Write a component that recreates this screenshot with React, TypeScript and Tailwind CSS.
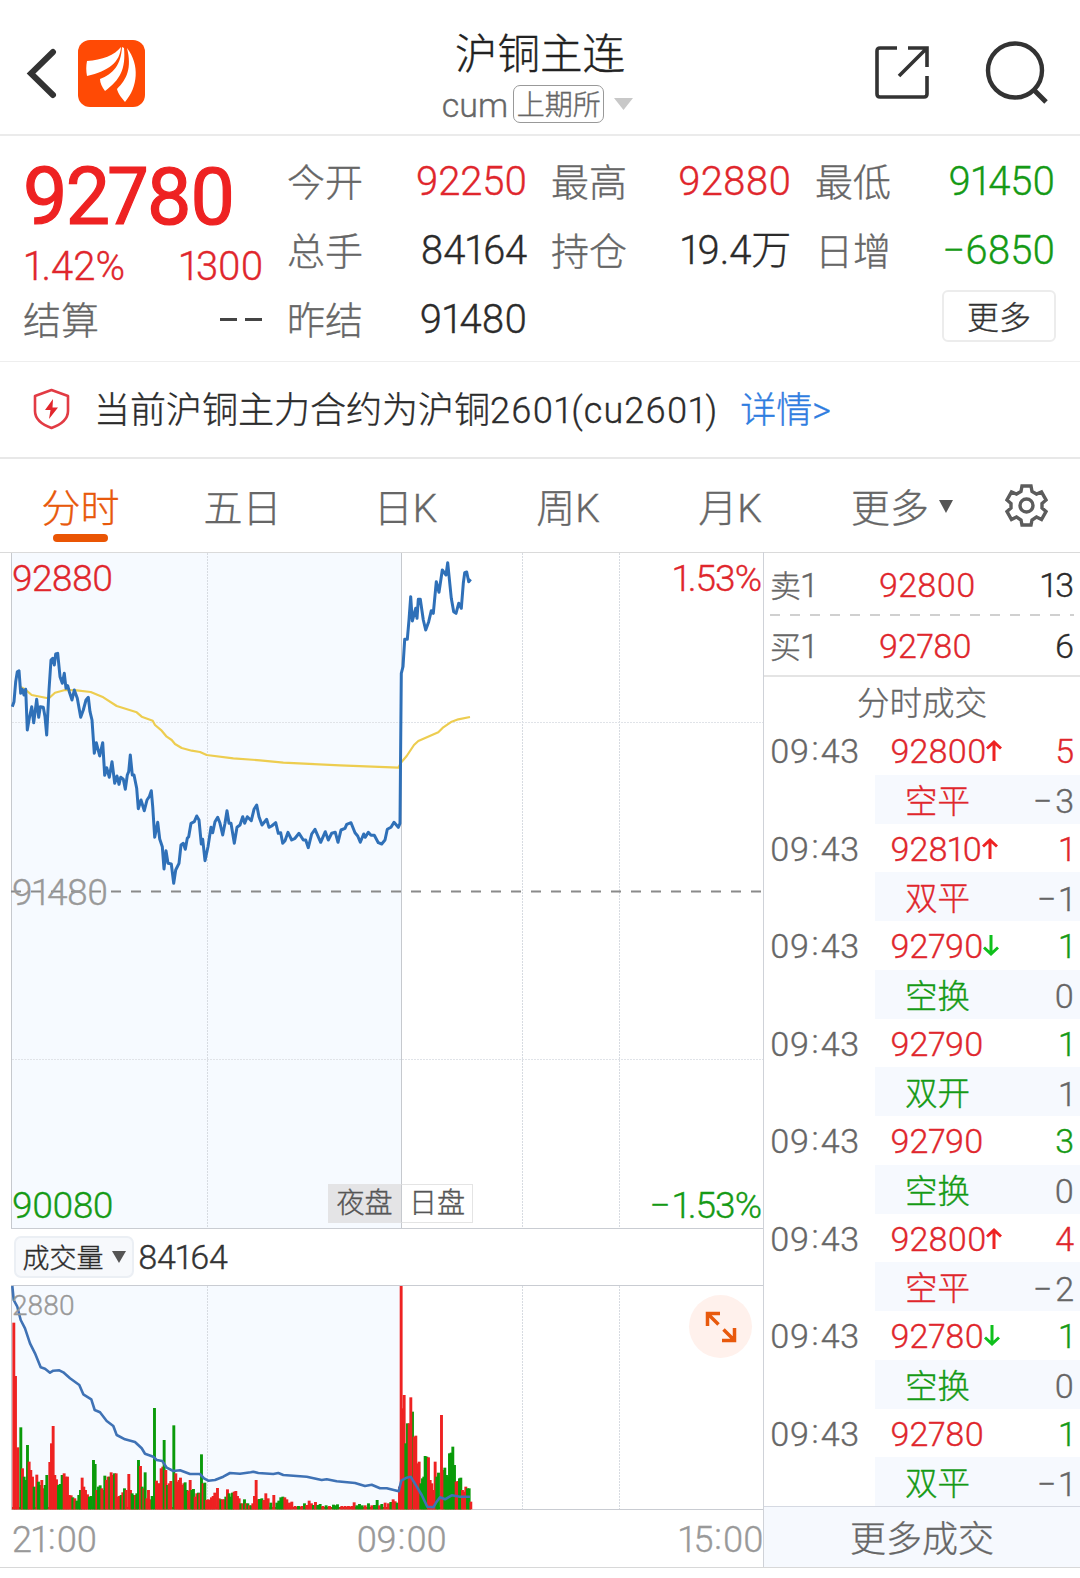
import React from 'react';

type Pt = [number, number];

const toPts = (s: string): Pt[] =>
  s.trim().split(/\s+/).map((p) => p.split(',').map(Number) as Pt);

/* Series are stored at three units per pixel, with the origin on the top left of their pane. */
const shift = (pts: Pt[], dx: number) => pts.map(([x, y]) => [x + dx, y] as Pt);
const line = (pts: Pt[], top: number) =>
  pts.map(([x, y]) => `${(x / 3).toFixed(1)},${(y / 3 + top).toFixed(1)}`).join(' ');

const priceNight = toPts(`37,500 42,485 47,425 52,395 57,392 62,460 67,448 72,465 77,448 82,570 88,535 95,500 101,548 110,478 116,532 121,500 130,502 135,530 140,585 147,450 153,360 158,355 163,375 167,342 173,340 180,410 187,430 193,400 198,445 203,437 208,455 216,480 223,450 232,475 242,532 250,510 258,480 265,472 270,515 276,540 283,640 289,608 299,648 308,608 314,706 320,683 328,712 336,665 344,730 351,708 357,733 362,712 370,718 376,748 382,705 386,695 391,645 397,705 402,705 410,745 415,806 423,780 433,812 441,780 448,770 454,752 458,800 464,892 473,847 479,897 487,920 492,987 498,932 504,970 514,972 521,1030 527,990 537,970 543,915 550,910 556,928 562,895 566,890 573,850 583,845 590,828 597,840 604,912 608,898 615,962 624,920 633,862 638,878 645,845 653,832 660,850 668,885 675,850 681,812 687,850 693,850 703,910 711,862`);
const priceDay = shift(toPts(`0,855 8,830 14,850 22,830 34,842 42,808 50,795 57,830 66,855 80,838 87,862 95,858 107,848 115,880 122,878 128,910 135,902 144,877 155,900 165,895 177,880 190,900 197,900 205,923 215,882 225,868 242,907 256,875 265,900 275,880 286,877 294,907 303,870 315,865 320,853 333,848 345,878 353,888 361,907 371,882 376,892 385,877 393,886 403,886 415,908 425,912 435,900 442,868 453,862 462,847 475,862 480,850 484,400 489,380 494,298 502,298 507,240 512,170 517,243 527,205 531,235 535,178 541,178 550,240 557,270 566,245 574,212 580,220 589,125 597,157 607,90 618,105 623,68 634,175 641,215 648,220 656,190 664,205 670,130 674,98 680,96 686,125 692,118`), 720);
const average = [
  ...toPts(`60,440 75,448 95,465 140,474 150,472 165,458 195,450 230,451 272,456 310,472 350,498 410,517 425,530 458,542 465,555 485,572 500,590 515,600 525,612 545,624 575,632 600,636 620,645 700,655 780,661`),
  ...shift(toPts(`130,668 300,676 475,683 484,667 500,648 522,615 535,603 595,577 610,562 635,545 655,538 690,531`), 720),
];
const interest = [
  ...toPts(`37,378 41,420 52,440 62,480 75,505 90,550 105,580 122,622 135,626 150,638 160,632 178,631 190,637 210,655 238,675 250,703 274,718 284,750 300,757 320,783 340,798 350,825 375,838 405,846 425,865 435,881 460,890 470,900 487,903 500,923 520,933 540,931 570,942 600,942 612,955 625,962 645,960 670,950 690,939 720,941 752,937`),
  ...shift(toPts(`40,935 55,939 100,942 115,939 130,945 200,950 245,960 260,958 290,964 345,969 375,978 395,974 420,985 440,985 476,994 484,962 500,953 512,950 530,980 545,1005 562,1040 580,1042 590,1025 600,1012 615,1018 635,1006 660,1010 690,1010`), 720),
];

type Bar = { x: number; y: number; up: boolean };
const toBars = (s: string, dx: number): Bar[] =>
  s.trim().split(/\s+/).map((t) => {
    const [x, y] = t.slice(0, -1).split(',').map(Number);
    return { x: x + dx, y, up: t.endsWith('R') };
  });
const bars: Bar[] = [
  ...toBars(`41,488R 46,648R 53,862R 62,802G 67,925R 72,950G 77,960G 82,855G 87,905R 92,930R 97,950R 102,980G 110,944R 115,965G 120,975G 125,960R 130,985R 135,975G 140,945G 149,906R 154,850R 159,798R 164,945R 169,958R 175,975G 180,972G 186,945G 192,940R 197,950R 202,950R 207,1005R 213,1006R 218,1012G 224,1015R 230,1022G 236,1005G 241,990G 246,953R 251,980R 256,990R 262,1003R 268,1010G 273,1008G 280,900G 285,912G 290,990R 295,980G 300,976G 305,985R 310,990R 314,947G 319,960R 324,950R 329,950G 333,937R 338,945R 343,940G 348,940R 353,1010R 358,1008R 363,1005G 368,997R 373,985G 378,990R 386,942R 391,990R 396,1000G 401,1005G 406,1005R 410,1000G 415,900G 421,918R 426,980G 431,985R 435,937G 440,1015R 445,990R 450,1018R 456,1008G 463,744G 469,962R 474,970R 479,970R 483,925R 488,920R 492,840G 497,930R 502,975G 507,970R 512,963R 521,796G 527,940R 532,965R 537,960R 541,953R 546,975R 551,970R 555,967G 560,990G 565,992R 570,960R 575,990G 580,987G 585,1010R 590,1000R 595,998G 599,1000R 604,883G 609,970R 614,968G 619,1020R 624,1018R 629,1020R 634,1012R 639,1008R 644,998R 652,984R 657,1015R 662,1018G 667,1018R 672,1018R 677,1010G 682,988R 687,1000G 692,1010G 697,998G 702,995R 707,993R 712,1008R 717,1015R 722,1030G 728,1030R 733,1018G 738,1030R 743,1030G 748,1036R 753,1036G 758,1030R 763,1008R 768,960R 773,1018R`, 0),
  ...toBars(`58,1017G 65,1015G 71,1020R 77,1000R 84,1015R 92,1028G 101,1005R 110,1028G 116,1022G 122,1012G 128,1010G 134,1012R 140,1018R 148,1028R 155,1025R 165,1038R 175,1038G 185,1038R 193,1030G 200,1035R 207,1022R 214,1030R 220,1035G 226,1026R 233,1035G 240,1032G 248,1038R 258,1036G 268,1038R 280,1034G 286,1036G 292,1033G 305,1038R 315,1038R 325,1038R 335,1038R 342,1027R 350,1036G 358,1032G 366,1036G 375,1036R 385,1030G 395,1036R 403,1035G 411,1020G 418,1036R 425,1032G 435,1028R 445,1030R 452,1026G 459,1018R 465,1024R 471,1028G 478,980R 488,745R 492,705R 483,378R 497,850G 502,790G 507,790R 517,755G 512,712R 522,830R 527,827R 532,910R 537,905R 542,970G 547,955G 551,950G 555,888G 560,890G 565,892R 570,960R 575,970R 580,990R 585,905R 590,950G 595,938G 604,765R 609,930R 614,923G 619,945G 623,950G 628,880G 633,878G 638,860G 643,915G 648,965R 653,963R 658,955G 662,953G 667,990R 672,995R 677,980R 682,985G 687,985G 692,1025R`, 720),
];

const GridV = ({ x, y1, y2 }: { x: number; y1: number; y2: number }) => (
  <line x1={x} x2={x} y1={y1} y2={y2} stroke="#d7dbe1" strokeWidth="1" strokeDasharray="2 1" />
);

const PriceChart = () => (
  <svg className="block h-[677px] w-[763px]" viewBox="0 552 763 677">
    <rect x="12" y="552" width="389" height="677" fill="#f6faff" />
    {[207.5, 522.5, 619.5].map((x) => <GridV key={x} x={x} y1={553} y2={1228} />)}
    {[722.5, 1059.5].map((y) => (
      <line key={y} x1="12" x2="763" y1={y} y2={y} stroke="#e0e3e8" strokeDasharray="2 1" />
    ))}
    <path d="M11.5 552V1229M401.5 552V1229" stroke="#c6c9ce" />
    <path d="M0 552.5H763" stroke="#dadada" />
    <path d="M11 1228.5H763" stroke="#c9ccd2" />
    <line x1="11" x2="763" y1="891.5" y2="891.5" stroke="#8a8a8a" strokeWidth="1.8" strokeDasharray="10 10" />
    <polyline points={line(average, 540)} fill="none" stroke="#edcd50" strokeWidth="2.2" strokeLinejoin="round" />
    <polyline points={line([...priceNight, ...priceDay], 540)} fill="none" stroke="#2f70b8" strokeWidth="3" strokeLinejoin="round" />
  </svg>
);

const VolumeChart = () => (
  <svg className="block h-[226px] w-[763px]" viewBox="0 1285 763 226">
    <rect x="12" y="1285" width="389" height="225" fill="#f6faff" />
    {[207.5, 522.5, 619.5].map((x) => <GridV key={x} x={x} y1={1286} y2={1509} />)}
    <path d="M11.5 1285V1510M401.5 1285V1510" stroke="#c6c9ce" />
    <path d="M11 1285.5H763M11 1509.5H763" stroke="#c9ccd2" />
    <rect x="12" y="1507" width="459" height="2.4" fill="#b53a14" />
    {bars.map((b, i) => (
      <rect key={i} x={b.x / 3 - 1.3} y={1160 + b.y / 3} width="2.9" height={(1048 - b.y) / 3} fill={b.up ? '#ee2222' : '#0a9a0a'} />
    ))}
    <polyline points={line(interest, 1160)} fill="none" stroke="#3f72b5" strokeWidth="2.6" strokeLinejoin="round" />
  </svg>
);

const Logo = () => (
  <svg className="ml-[21px] h-[67px] w-[67px]" viewBox="0 0 67 67">
    <rect width="67" height="67" rx="12" fill="#ff4a05" />
    <path d="M9 21C24 20 37 15 43 7C42 22 31 31 9 36C8 31 8 26 9 21Z" fill="#fff" />
    <path d="M44 7L46 8C48 29 42 40 27 51C24 47 22 43 22 39C35 34 43 25 44 7Z" fill="#fff" />
    <path d="M49 8C62 25 60 47 47 62C44 58 40 54 39 49C49 39 54 28 49 8Z" fill="#fff" />
  </svg>
);

const Stat = ({ label, value, tone, w }: { label: string; value: string; tone: string; w: string }) => (
  <div className={`flex h-[69px] items-center justify-between ${w}`}>
    <span className="pt-[2px] text-[38px] text-[#666]">{label}</span>
    <span className={`text-[40px] tracking-[-0.2px] ${tone}`}>{value}</span>
  </div>
);

const RED = 'text-[#e0262c]';
const GREEN = 'text-[#159a15]';
const DARK = 'text-[#2b2b2b]';

/* Clock label whose colon is lifted to the middle of the digits. */
const Clock = ({ t, className = '' }: { t: string; className?: string }) => {
  const [h, m] = t.split(':');
  return (
    <span className={className}>
      {h}<span className="relative top-[-3px] mx-[1.5px]">:</span>{m}
    </span>
  );
};

const Arrow = ({ up }: { up: boolean }) => (
  <svg className="h-[24px] w-[16px]" viewBox="0 0 16 24" fill="none" stroke={up ? '#ee2222' : '#0fc01c'} strokeWidth="3">
    {up ? <path d="M8 22V3M1 9.500L8 3L15 9.500" /> : <path d="M8 1V20M1 13.500L8 20L15 13.500" />}
  </svg>
);

const trades: [string, string, number, string, string, string, string][] = [
  ['92800', 'u', 5, RED, '空平', RED, '−3'],
  ['92810', 'u', 1, RED, '双平', RED, '−1'],
  ['92790', 'd', 1, GREEN, '空换', GREEN, '0'],
  ['92790', '', 1, GREEN, '双开', GREEN, '1'],
  ['92790', '', 3, GREEN, '空换', GREEN, '0'],
  ['92800', 'u', 4, RED, '空平', RED, '−2'],
  ['92780', 'd', 1, GREEN, '空换', GREEN, '0'],
  ['92780', '', 1, GREEN, '双平', GREEN, '−1'],
];

const tabs: [string, string][] = [
  ['五日', 'w-[163px]'],
  ['日K', 'w-[163px]'],
  ['周K', 'w-[162px]'],
  ['月K', 'w-[162px]'],
];

export default function App() {
  return (
    <div className="flex h-[1578px] w-[1080px] flex-col overflow-hidden whitespace-nowrap bg-white font-['Roboto','Noto_Sans_CJK_SC',sans-serif] font-light leading-none proportional-nums [-webkit-text-stroke:0.35px]">
      <header className="flex h-[136px] shrink-0 items-start border-b-2 border-[#ebebeb]">
        <div className="flex w-[360px] items-center pl-[26px] pt-[40px]">
          <svg className="h-[52px] w-[31px]" viewBox="0 0 31 52" fill="none" stroke="#333" strokeWidth="6">
            <path d="M27 4L5 25.500L27 47" strokeLinecap="round" />
          </svg>
          <Logo />
        </div>
        <div className="flex w-[360px] flex-col items-center pt-[32px]">
          <h1 className="text-[42.500px] leading-[46px] text-[#222]">沪铜主连</h1>
          <div className="mt-[6px] flex h-[40px] items-center pr-[5px] text-[#666]">
            <span className="pt-[2px] text-[34px]">cum</span>
            <span className="ml-[5px] flex h-[38px] w-[91px] items-center justify-center rounded-[7px] border-[1.500px] border-[#999] pt-[3px] text-[28px]">上期所</span>
            <svg className="ml-[10px] h-[12px] w-[19px]" viewBox="0 0 19 12"><path d="M0 0H19L9.500 12Z" fill="#c8c8c8" /></svg>
          </div>
        </div>
        <div className="flex w-[360px] items-start justify-end gap-[56px] pr-[31px] pt-[40px]">
          <svg className="mt-[5px] h-[54px] w-[54px]" viewBox="0 0 54 54" fill="none" stroke="#333" strokeWidth="3.600">
            <path d="M22 3H5Q2 3 2 6V49Q2 52 5 52H49Q52 52 52 49V31M33 3H52V22M52 3L24 31" />
          </svg>
          <svg className="h-[64px] w-[64px]" viewBox="0 0 64 64" fill="none" stroke="#333" strokeWidth="4.400">
            <circle cx="30" cy="30.500" r="27" />
            <path d="M49 50L61 62" strokeWidth="5" />
          </svg>
        </div>
      </header>

      <section className="flex h-[226px] shrink-0 border-b border-[#eeeeee] pt-[11px]">
        <div className="flex w-[263px] flex-col pl-[23px]">
          <div className="h-[98px] pt-[11px] text-[79px] font-normal leading-[78px] tracking-[-2.4px] text-[#ee2222] [-webkit-text-stroke:1.2px]">92780</div>
          <div className="flex h-[41px] items-center justify-between pl-[1px] pt-[2px] text-[40px] tracking-[-0.4px] text-[#e0262c]"><span className="tracking-normal">1.42%</span><span>1300</span></div>
          <div className="flex h-[67px] items-center justify-between"><span className="pt-[2px] text-[38px] text-[#666]">结算</span><span className="mr-[1px] flex gap-[8px]"><i className="h-[3px] w-[17px] bg-[#444]" /><i className="h-[3px] w-[17px] bg-[#444]" /></span></div>
        </div>
        <div className="ml-[24px] flex flex-col">
          <Stat label="今开" value="92250" tone={RED} w="w-[240px]" />
          <Stat label="总手" value="84164" tone={DARK} w="w-[240px]" />
          <Stat label="昨结" value="91480" tone={DARK} w="w-[240px]" />
        </div>
        <div className="ml-[24px] flex flex-col">
          <Stat label="最高" value="92880" tone={RED} w="w-[240px]" />
          <Stat label="持仓" value="19.4万" tone={DARK} w="w-[240px]" />
        </div>
        <div className="ml-[24px] flex w-[241px] flex-col">
          <Stat label="最低" value="91450" tone={GREEN} w="w-[240px]" />
          <Stat label="日增" value="−6850" tone={GREEN} w="w-[240px]" />
          <button className="mt-[5px] h-[52px] w-[114px] self-end rounded-[6px] border-2 border-[#ececec] pt-[3px] text-[32px] text-[#333]">更多</button>
        </div>
      </section>

      <section className="flex h-[97px] shrink-0 items-center border-b-2 border-[#e8e8e8] pl-[33px]">
        <svg className="mt-[-2px] h-[42px] w-[37px]" viewBox="0 0 37 42" fill="none" stroke="#e23b44" strokeWidth="2.600">
          <path d="M18.500 2L35 8V23Q35 34 18.500 40Q2 34 2 23V8Z" strokeLinejoin="round" />
          <path d="M20 11L12 22H17.500L16 31L25 19.500H19.500Z" fill="#e2262c" stroke="none" />
        </svg>
        <span className="ml-[24px] pt-[3px] text-[36px] text-[#2b2b2b]">当前沪铜主力合约为沪铜<span className="tracking-[1.1px]">2601(cu2601)</span></span>
        <a className="ml-[22px] pt-[3px] text-[36px] text-[#2f7de0]">详情&gt;</a>
      </section>

      <nav className="flex h-[93px] shrink-0 items-start pt-[29px] text-[39px] leading-[42px] text-[#666]">
        <div className="flex w-[161px] flex-col items-center text-[#e8590c]">
          <span>分时</span>
          <span className="mt-[4px] h-[8px] w-[55px] rounded-full bg-[#ea5504]" />
        </div>
        {tabs.map(([t, w]) => <div key={t} className={`${w} text-center`}>{t}</div>)}
        <div className="ml-[40px] flex items-center">
          更多<svg className="mt-[-5px] ml-[10px] h-[13px] w-[14px]" viewBox="0 0 14 13"><path d="M0 0H14L7 13Z" fill="#555" /></svg>
        </div>
        <svg className="mt-[-4px] ml-[52px] h-[43px] w-[43px]" viewBox="0 0 43 43" fill="none" stroke="#5c5c5c" strokeWidth="3.400" strokeLinejoin="miter">
          <path d="M17 2H26L27 7.500L31.500 10L36.500 8L41 16L37 19.500V24L41 27.500L36.500 35.500L31.500 33L27 36L26 41H17L16 36L11.500 33L6.500 35.500L2 27.500L6 24V19.500L2 16L6.500 8L11.500 10L16 7.500Z" />
          <circle cx="21.500" cy="21.500" r="6.500" />
        </svg>
      </nav>

      <main className="flex h-[1016px] shrink-0 border-b border-[#d8d8d8]">
        <div className="w-[764px] border-r border-[#cfd2d8]">
          <div className="relative text-[37px] tracking-[-1px]">
            <PriceChart />
            <span className="absolute left-[12px] top-[8px] text-[#e0262c]">92880</span>
            <span className="absolute right-[2px] top-[8px] text-[#e0262c]">1.53%</span>
            <span className="absolute left-[12px] top-[322px] text-[#999]">91480</span>
            <span className="absolute bottom-[5px] left-[12px] text-[#159a15]">90080</span>
            <span className="absolute bottom-[5px] right-[2px] text-[#159a15]"><span className="mr-[3px]">−</span>1.53%</span>
            <div className="absolute bottom-[6px] left-[328px] flex text-[28px] tracking-normal text-[#555]">
              <span className="flex h-[39px] w-[73px] items-center justify-center bg-[#e4e4e6]">夜盘</span>
              <span className="flex h-[39px] w-[72px] items-center justify-center border border-l-[#c6c9ce] border-[#e4e4e4] bg-white">日盘</span>
            </div>
          </div>
          <div className="flex h-[56px] items-center pl-[14px]">
            <span className="flex h-[42px] w-[120px] items-center justify-center gap-[8px] rounded-[7px] border-2 border-[#ebeff4] bg-[#f7f9fc] text-[27px] text-[#2b2b2b]"><span className="pt-[4px]">成交量</span><svg className="h-[12px] w-[14px]" viewBox="0 0 14 12"><path d="M0 0H14L7 12Z" fill="#555" /></svg></span>
            <span className="ml-[4px] text-[34px] tracking-[-0.4px] text-[#333]">84164</span>
          </div>
          <div className="relative">
            <VolumeChart />
            <span className="absolute left-[12px] top-[7px] text-[28px] tracking-[-0.3px] text-[#999]">2880</span>
            <div className="absolute left-[689px] top-[10px] flex h-[63px] w-[63px] items-center justify-center rounded-full bg-[#fff1ec]">
              <svg className="h-[32px] w-[32px]" viewBox="0 0 32 32" fill="none" stroke="#e8590c" strokeWidth="3.500">
                <path d="M2.500 15V2.500H15M3 3L13.500 13.500M29.500 17V29.500H17M29 29L18.500 18.500" />
              </svg>
            </div>
          </div>
          <div className="flex h-[57px] items-center justify-between pl-[12px] text-[36px] tracking-[-0.6px] text-[#999]"><Clock t="21:00" /><Clock t="09:00" className="ml-[28px]" /><Clock t="15:00" /></div>
        </div>

        <div className="flex w-[316px] flex-col">
          <div className="border-t border-[#dadada] px-[6px]">
            <div className="flex h-[61px] items-center pt-[2px] text-[34px]"><span className="w-[109px] text-[#666]"><span className="text-[31px]">卖</span>1</span><span className={RED}>92800</span><span className={`ml-auto ${DARK}`}>13</span></div>
            <svg className="block h-[2px] w-[304px]" viewBox="0 0 304 2"><path d="M0 1H304" stroke="#d0d0d0" strokeWidth="2" strokeDasharray="10 10" /></svg>
            <div className="flex h-[59px] items-center text-[34px]"><span className="w-[109px] text-[#666]"><span className="text-[31px]">买</span>1</span><span className={`tracking-[-0.3px] ${RED}`}>92780</span><span className={`ml-auto ${DARK}`}>6</span></div>
          </div>
          <div className="flex h-[51px] items-center justify-center border-t-2 border-[#e4e4e4] pt-[5px] text-[32.500px] text-[#666]">分时成交</div>
          {trades.map(([price, dir, vol, volTone, kind, kindTone, delta], i) => (
            <div key={i} className="h-[97.500px] shrink-0 text-[34px]">
              <div className="flex h-[48.500px] items-center pl-[6px] pr-[6px] pt-[2px] text-[#666]">
                <Clock t="09:43" className="w-[120.500px] tracking-[0.6px]" />
                <span className={`tracking-[-0.15px] ${RED}`}>{price}</span>
                {dir && <Arrow up={dir === 'u'} />}
                <span className={`ml-auto ${volTone}`}>{vol}</span>
              </div>
              <div className="ml-[111px] flex h-[49px] items-center justify-between bg-[#f6f9fe] pl-[30px] pr-[6px] pt-[6px]">
                <span className={`text-[32.500px] ${kindTone}`}>{kind}</span>
                <span className="mt-[-2px] text-[#666]">{delta.replace('−', '')
                  === delta ? delta : <><span className="mr-[3px]">−</span>{delta.slice(1)}</>}</span>
              </div>
            </div>
          ))}
          <div className="flex flex-1 items-center justify-center border-t border-[#d5d9e2] bg-[#f6f9fe] pt-[6px] text-[36px] text-[#666]">更多成交</div>
        </div>
      </main>
    </div>
  );
}
